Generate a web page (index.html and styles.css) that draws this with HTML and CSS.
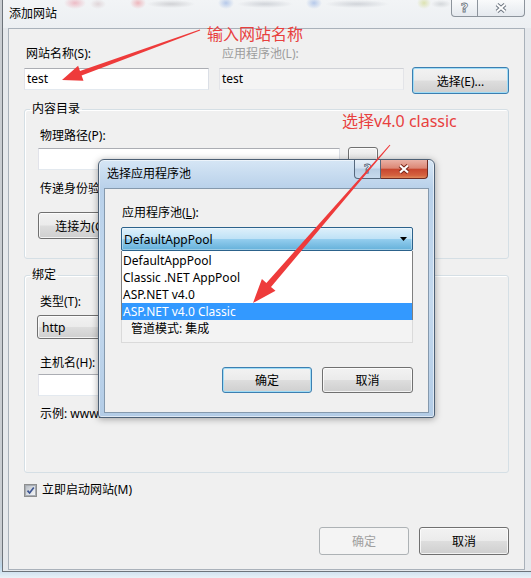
FILE: index.html
```html
<!DOCTYPE html>
<html lang="zh-CN">
<head>
<meta charset="utf-8">
<title>添加网站</title>
<link rel="stylesheet" href="styles.css">
</head>
<body>
<div class="window">
  <div class="titlebar">
    <span class="title">添加网站</span>
    <div class="caption">
      <span class="cap-btn cap-help"><span class="qmark">?</span></span>
      <span class="cap-btn cap-close">
        <svg width="14" height="12" viewBox="-7 -6 14 12"><path d="M-4-3.5L4 3.5M4-3.5L-4 3.5" stroke="#6d7681" stroke-width="4" fill="none"/><path d="M-4-3.5L4 3.5M4-3.5L-4 3.5" stroke="#fff" stroke-width="2" fill="none"/></svg>
      </span>
    </div>
  </div>
  <div class="client">
    <div class="site-row">
      <div class="col col-name">
        <div class="lbl">网站名称(S):</div>
        <div class="textbox">test</div>
      </div>
      <div class="col col-pool">
        <div class="lbl lbl-disabled">应用程序池(L):</div>
        <div class="textbox textbox-ro">test</div>
      </div>
      <div class="col col-btn">
        <button class="btn btn-default btn-select">选择(E)...</button>
      </div>
    </div>

    <fieldset class="group">
      <legend>内容目录</legend>
      <div class="lbl">物理路径(P):</div>
      <div class="path-row">
        <div class="textbox path-box"></div>
        <button class="btn btn-browse" aria-label="浏览"></button>
      </div>
      <div class="lbl lbl-gap">传递身份验证:</div>
      <div class="btn-row">
        <button class="btn btn-connect">连接为(C)...</button>
      </div>
    </fieldset>

    <fieldset class="group group-bind">
      <legend>绑定</legend>
      <div class="lbl">类型(T):</div>
      <div class="combo combo-type"><span>http</span></div>
      <div class="lbl lbl-host">主机名(H):</div>
      <div class="textbox host-box"></div>
      <div class="lbl lbl-gap">示例: www.contoso.com</div>
    </fieldset>

    <div class="check-row">
      <span class="checkbox">
        <svg width="9" height="9" viewBox="0 0 9 9"><path d="M1.5 4.6L3.6 7L7.8 1.6" stroke="#3d5592" stroke-width="1.7" fill="none"/></svg>
      </span>
      <span class="lbl-check">立即启动网站(M)</span>
    </div>

    <div class="dlg-buttons">
      <button class="btn btn-disabled btn-ok">确定</button>
      <button class="btn btn-cancel">取消</button>
    </div>
  </div>
</div>

<div class="subdlg">
  <div class="sub-titlebar">
    <span class="sub-title">选择应用程序池</span>
    <div class="sub-caption">
      <span class="scap scap-help"><span class="qmark qmark-sub">?</span></span>
      <span class="scap scap-close">
        <svg width="14" height="12" viewBox="-7 -6 14 12"><path d="M-4-3.5L4 3.5M4-3.5L-4 3.5" stroke="#7a2619" stroke-width="4.2" fill="none"/><path d="M-4-3.5L4 3.5M4-3.5L-4 3.5" stroke="#fff" stroke-width="2.2" fill="none"/></svg>
      </span>
    </div>
  </div>
  <div class="sub-client">
    <div class="lbl lbl-sub">应用程序池(<u>L</u>):</div>
    <div class="combo combo-open">
      <span>DefaultAppPool</span>
      <svg class="drop-arrow" width="7" height="4" viewBox="0 0 7 4"><path d="M0 0H7L3.5 4Z" fill="#000"/></svg>
    </div>
    <div class="pool-area">
      <div class="props">管道模式: 集成</div>
      <ul class="droplist">
        <li>DefaultAppPool</li>
        <li>Classic .NET AppPool</li>
        <li>ASP.NET v4.0</li>
        <li class="sel">ASP.NET v4.0 Classic</li>
      </ul>
    </div>
    <div class="sub-buttons">
      <button class="btn btn-default sub-ok">确定</button>
      <button class="btn sub-cancel">取消</button>
    </div>
  </div>
</div>

<div class="note note-name">输入网站名称</div>
<div class="note note-pool">选择v4.0 classic</div>

<svg class="arrows" width="531" height="578" viewBox="0 0 531 578">
  <polygon fill="#ee3b3b" points="199.8,29.5 200.2,30.5 81.6,75.6 83.5,80.7 62,80 78.1,65.7 80.0,70.9"/>
  <polygon fill="#ee3b3b" points="389.6,144.7 390.4,145.3 271.0,286.9 275.5,290.8 253,303 261.9,279.0 266.4,282.9"/>
</svg>
</body>
</html>
```

FILE: styles.css
```css
* { box-sizing: border-box; }

html, body {
  margin: 0;
  padding: 0;
}

body {
  width: 531px;
  height: 578px;
  overflow: hidden;
  position: relative;
  font-family: "Noto Sans", "Noto Sans CJK SC", sans-serif;
  font-size: 12px;
  color: #000;
  background: linear-gradient(180deg, #c9cdd2 0%, #c9cdd2 96%, #bcd6ea 98%, #e9f1f7 100%);
}

/* ---------- main window ---------- */
.window {
  width: 529px;
  height: 572px;
  margin-left: 2px;
  border-left: 1px solid #6d737a;
  border-bottom: 1px solid #6d737a;
  background: #e5e8ec;
  display: flex;
  flex-direction: column;
}

.titlebar {
  height: 28px;
  flex: none;
  display: flex;
  align-items: flex-start;
  padding-left: 6px;
  background:
    radial-gradient(ellipse 11px 6px at 72px 3px, rgba(232, 120, 140, .45), transparent),
    radial-gradient(ellipse 8px 5px at 95px 4px, rgba(200, 170, 175, .4), transparent),
    radial-gradient(ellipse 8px 6px at 135px 3px, rgba(235, 110, 120, .45), transparent),
    radial-gradient(ellipse 24px 4px at 168px 4px, rgba(160, 160, 165, .4), transparent),
    radial-gradient(ellipse 8px 6px at 223px 3px, rgba(110, 150, 220, .45), transparent),
    radial-gradient(ellipse 28px 4px at 262px 4px, rgba(160, 165, 175, .4), transparent),
    radial-gradient(ellipse 8px 6px at 311px 3px, rgba(110, 150, 220, .45), transparent),
    radial-gradient(ellipse 32px 4px at 354px 4px, rgba(160, 165, 175, .4), transparent),
    radial-gradient(ellipse 7px 6px at 421px 3px, rgba(200, 210, 110, .5), transparent),
    radial-gradient(ellipse 10px 4px at 438px 4px, rgba(170, 175, 180, .4), transparent),
    linear-gradient(180deg, #f2f4f6 0%, #eceff2 100%);
}

.title {
  line-height: 28px;
  font-size: 12px;
}

.caption {
  margin-left: auto;
  margin-right: 6px;
  display: flex;
}

.cap-btn {
  height: 17px;
  display: flex;
  align-items: center;
  justify-content: center;
  border: 1px solid #8d949c;
  border-top: none;
  background: linear-gradient(180deg, rgba(255, 255, 255, .55) 0%, rgba(225, 230, 236, .7) 100%);
}

.cap-help {
  width: 27px;
  border-radius: 0 0 0 4px;
}

.cap-close {
  width: 47px;
  border-left: none;
  border-radius: 0 0 4px 0;
}

.qmark {
  font-family: "DejaVu Sans", sans-serif;
  font-weight: bold;
  font-size: 13px;
  line-height: 14px;
  color: #fff;
  -webkit-text-stroke: 0.8px #6d7681;
}

.client {
  flex: none;
  margin-left: 5px;
  width: 517px;
  height: 542px;
  border: 1px solid #a9b1ba;
  background: #f0f0f0;
  padding: 0 15px;
}

/* ---------- generic controls ---------- */
.lbl {
  line-height: 16px;
  padding-left: 2px;
  white-space: nowrap;
}

.lbl-disabled {
  color: #9d9d9d;
  padding-left: 3px;
}

.textbox {
  height: 22px;
  border: 1px solid;
  border-color: #abadb3 #dbdfe6 #e3e9ef #e2e3ea;
  background: #fff;
  padding-left: 2px;
  line-height: 20px;
  white-space: nowrap;
}

.textbox-ro {
  background: #f4f4f4;
  border-color: #cfd1d6 #e3e4e8 #e8ebef #e3e4e8;
}

.btn {
  font-family: inherit;
  font-size: 12px;
  color: #000;
  padding: 0;
  margin: 0;
  border: 1px solid #707070;
  border-radius: 3px;
  background: linear-gradient(180deg, #f2f2f2 0%, #ebebeb 48%, #dddddd 52%, #cfcfcf 100%);
  box-shadow: inset 0 0 0 1px rgba(255, 255, 255, .75);
  white-space: nowrap;
  overflow: hidden;
}

.btn-default {
  border-color: #3c7fb1;
  box-shadow: inset 0 0 0 1px #9fdcf6;
}

.btn-disabled {
  border-color: #adb2b5;
  background: #f4f4f4;
  box-shadow: none;
  color: #a0a0a0;
}

.combo {
  height: 24px;
  border: 1px solid #707070;
  border-radius: 3px;
  background: linear-gradient(180deg, #f2f2f2 0%, #ebebeb 48%, #dddddd 52%, #cfcfcf 100%);
  box-shadow: inset 0 0 0 1px rgba(255, 255, 255, .75);
  display: flex;
  align-items: center;
  padding-left: 3px;
  white-space: nowrap;
}

/* ---------- main dialog rows ---------- */
.site-row {
  display: flex;
  margin-top: 17px;
}

.col-name { width: 185px; }
.col-pool { width: 185px; margin-left: 10px; }
.col-btn { width: 97px; margin-left: 8px; padding-top: 21px; }

.col .textbox { margin-top: 6px; }

.btn-select {
  width: 97px;
  height: 27px;
}

.group {
  margin: 7px 0 0 0;
  border: 1px solid #d5dfe5;
  border-radius: 3px;
  padding: 11px 13px 19px 13px;
  min-width: 0;
  box-shadow: inset 1px 1px 0 #fff;
}

.group legend {
  padding: 0 2px;
  margin-left: -8px;
  line-height: 16px;
}

.group-bind {
  margin-top: 8px;
  padding-bottom: 50px;
}

.path-row {
  display: flex;
  align-items: center;
  margin-top: 3px;
}

.path-box { width: 302px; }

.btn-browse {
  width: 30px;
  height: 24px;
  margin-left: 8px;
}

.lbl-gap { margin-top: 10px; }

.btn-row {
  display: flex;
  margin-top: 15px;
}

.btn-connect { width: 95px; height: 27px; }

.combo-type {
  width: 110px;
  margin-top: 5px;
  margin-left: -1px;
  padding-left: 4px;
}

.lbl-host { margin-top: 16px; }

.host-box {
  width: 340px;
  margin-top: 3px;
}

.check-row {
  display: flex;
  align-items: center;
  height: 16px;
  margin-top: 9px;
}

.checkbox {
  width: 13px;
  height: 13px;
  border: 1px solid #8e8f8f;
  background: #f4f4f4;
  display: flex;
  align-items: center;
  justify-content: center;
}

.checkbox svg {
  background: linear-gradient(135deg, #b7bcc3 0%, #dfe3e7 60%, #f4f5f6 100%);
  border: 1px solid #a7acb3;
  width: 9px;
  height: 9px;
  box-sizing: content-box;
  margin: 0;
}

.lbl-check {
  margin-left: 5px;
  line-height: 16px;
}

.dlg-buttons {
  display: flex;
  justify-content: flex-end;
  margin-top: 29px;
}

.btn-ok { width: 90px; height: 28px; }
.btn-cancel { width: 90px; height: 28px; margin-left: 10px; }

/* ---------- sub dialog ---------- */
.subdlg {
  position: absolute;
  left: 98px;
  top: 159px;
  width: 337px;
  height: 259px;
  z-index: 2;
  border: 1px solid #4d6075;
  border-radius: 6px 6px 3px 3px;
  background: linear-gradient(180deg, #d6e6f5 0%, #b9d1ea 11%, #c4d9ee 55%, #b3cce6 100%);
  box-shadow: 0 1px 7px rgba(0, 0, 0, .35), inset 0 0 0 1px rgba(255, 255, 255, .55);
  display: flex;
  flex-direction: column;
}

.sub-titlebar {
  height: 28px;
  flex: none;
  display: flex;
  align-items: flex-start;
  padding-left: 8px;
}

.sub-title {
  line-height: 28px;
}

.sub-caption {
  margin-left: auto;
  margin-right: 6px;
  display: flex;
}

.scap {
  height: 19px;
  display: flex;
  align-items: center;
  justify-content: center;
  border: 1px solid #55687d;
  border-top: none;
}

.scap-help {
  width: 27px;
  border-radius: 0 0 0 4px;
  background: linear-gradient(180deg, #e8f0f8 0%, #d2e1f0 45%, #b8cde3 50%, #c8dbee 100%);
}

.scap-close {
  width: 47px;
  border-left: none;
  border-color: #6e2b22;
  border-radius: 0 0 4px 0;
  background: linear-gradient(180deg, #eab1a5 0%, #dc8775 45%, #c8472f 52%, #d4613f 85%, #e08a5c 100%);
}

.qmark-sub {
  -webkit-text-stroke: 0.8px #4e6178;
}

.sub-client {
  flex: none;
  margin: 0 5px;
  height: 225px;
  border: 1px solid #8599ad;
  background: #f0f0f0;
  padding: 16px 15px 0 16px;
}

.lbl-sub { padding-left: 1px; }

.combo-open {
  margin-top: 6px;
  border-color: #2c628b;
  border-radius: 2px;
  background: linear-gradient(180deg, #def0fb 0%, #bfe2f6 48%, #93cdee 52%, #65b1da 100%);
  box-shadow: inset 0 0 0 1px rgba(255, 255, 255, .35);
  padding-left: 2px;
  padding-right: 5px;
}

.drop-arrow {
  margin-left: auto;
}

.pool-area {
  position: relative;
  height: 92px;
  border: 1px solid #dadada;
  background: #f3f3f3;
}

.props {
  padding: 69px 0 0 9px;
  line-height: 15px;
}

.droplist {
  position: absolute;
  top: -1px;
  left: -1px;
  right: -1px;
  margin: 0;
  padding: 1px 0 0 0;
  list-style: none;
  background: #fff;
  border: 1px solid #7f7f7f;
  border-top: none;
  border-bottom: none;
}

.droplist li {
  height: 17px;
  line-height: 17px;
  padding-left: 1px;
  white-space: nowrap;
}

.droplist li.sel {
  background: #3399ff;
  color: #fff;
}

.sub-buttons {
  display: flex;
  justify-content: flex-end;
  margin-top: 24px;
}

.sub-ok { width: 90px; height: 26px; }
.sub-cancel { width: 91px; height: 26px; margin-left: 10px; }

/* ---------- annotations ---------- */
.note {
  position: absolute;
  z-index: 3;
  color: #e8403e;
  font-size: 16px;
  line-height: 20px;
  white-space: nowrap;
}

.note-name { left: 207px; top: 24px; }
.note-pool { left: 342px; top: 111px; }

.arrows {
  position: absolute;
  left: 0;
  top: 0;
  z-index: 4;
  pointer-events: none;
}
```
